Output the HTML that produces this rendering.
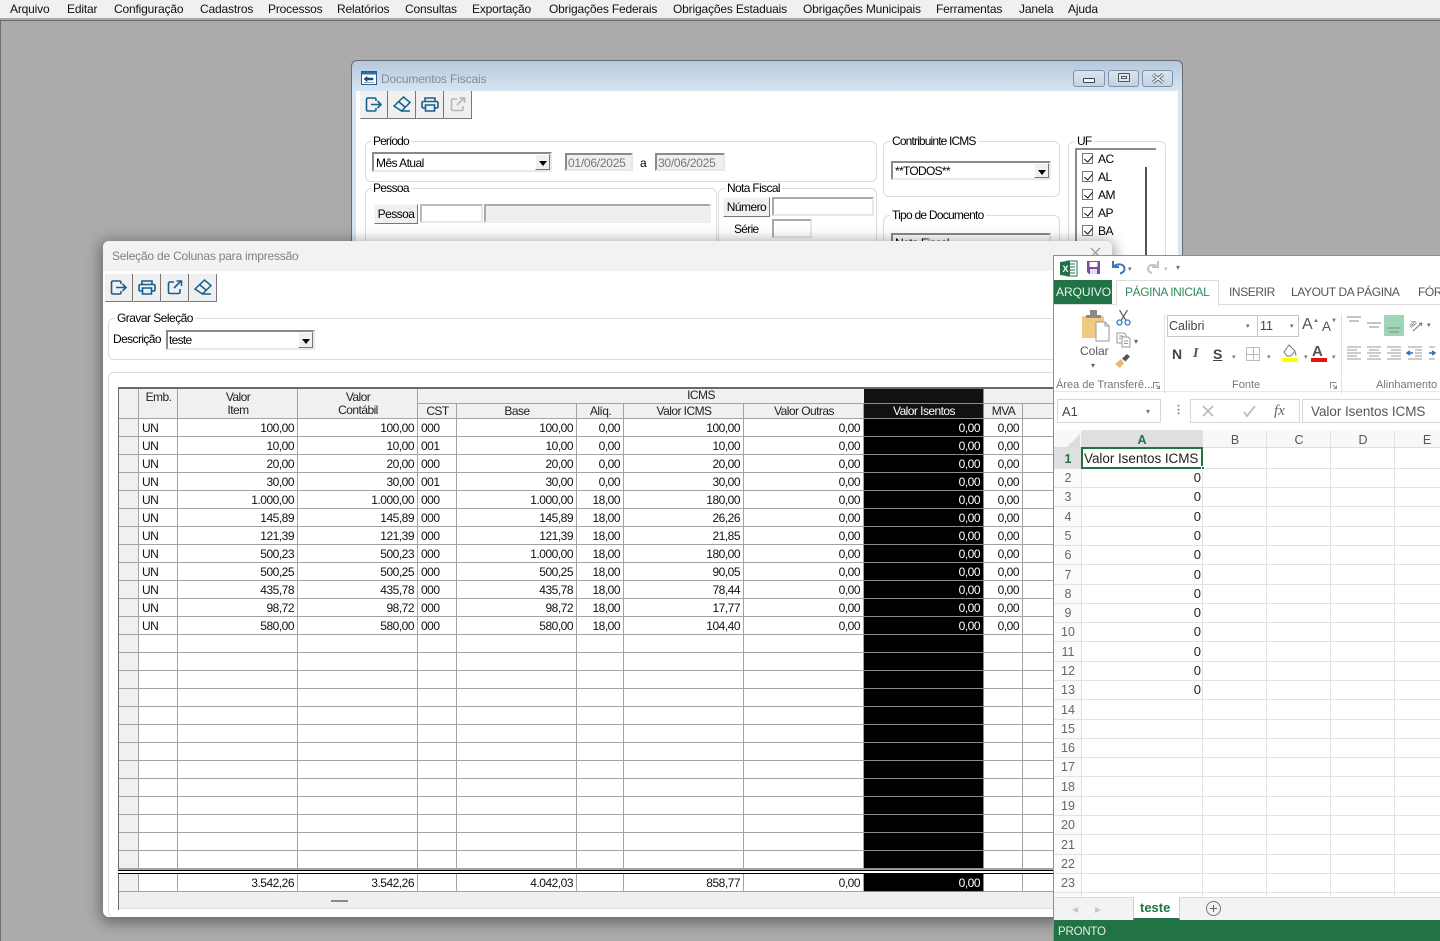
<!DOCTYPE html>
<html lang="pt-BR"><head><meta charset="utf-8"><title>Documentos Fiscais</title>
<style>
*{box-sizing:border-box}
html,body{margin:0;padding:0;width:1440px;height:941px;overflow:hidden;background:#ababab}
body{position:relative;font:12px "Liberation Sans",sans-serif;color:#000}
.a,.t{position:absolute}
.t{white-space:nowrap;letter-spacing:-.55px;line-height:14px}
#menu{left:0;top:0;width:1440px;height:18px;background:#f0f0f0}
#menu .t{top:2px;color:#111;letter-spacing:-.17px}
.gb{position:absolute;border:1px solid #dcdcdc;border-radius:6px}
.lg{position:absolute;background:#fff;padding:0 2px;line-height:13px;letter-spacing:-.75px;white-space:nowrap}
.ins{position:absolute;border:2px solid;border-color:#8a8a8a #e8e8e8 #e8e8e8 #8a8a8a;background:#fff}
.dis{background:#efefef;color:#777}
.arr{position:absolute;right:0;top:0;bottom:0;width:15px;background:#f0f0f0;border:1px solid;border-color:#fff #777 #777 #fff}
.arr:after{content:"";position:absolute;left:3px;top:6px;border:4px solid transparent;border-top:5px solid #000;border-bottom:0}
.btn{position:absolute;background:#f0f0f0;border:1px solid;border-color:#f8f8f8 #777 #777 #f8f8f8;text-align:center;letter-spacing:-.55px;line-height:19px}
.tb{position:absolute;width:28px;height:28px;background:#f0f0f0;border-right:1px solid #777;border-bottom:1px solid #777;border-left:1px solid #eee}
.tb svg{position:absolute;left:4px;top:5px}
.wb{position:absolute;top:70px;height:17px;border:1px solid #7f93a8;border-radius:3px;background:linear-gradient(#d9e5f0,#c4d2e2)}
.ck{position:absolute;left:1082px;width:11px;height:11px;border:1px solid #777;background:#fff}
.ck:after{content:"";position:absolute;left:3px;top:0;width:4px;height:7px;border:solid #111;border-width:0 1.6px 1.6px 0;transform:rotate(40deg)}
#grid{position:absolute;left:119px;top:419px;border-collapse:separate;border-spacing:0;table-layout:fixed;width:948px}
#grid td,#foot td{height:18px;padding:2px 3px 0 0;vertical-align:top;border-right:1px solid #a3a3a3;border-bottom:1px solid #a3a3a3;text-align:right;letter-spacing:-.5px;line-height:15px;font-size:12px;color:#111;overflow:hidden;white-space:nowrap}
#grid td:nth-child(1),#foot td:nth-child(1){background:#f0f0f0}
#grid td:nth-child(2),#grid td:nth-child(5){text-align:left;padding-left:3px}
#grid td:nth-child(10),#foot td:nth-child(10){background:#000;color:#fff;border-right-color:#8c8c8c;border-bottom-color:#8c8c8c}
#foot{position:absolute;left:119px;top:874px;border-collapse:separate;border-spacing:0;table-layout:fixed;width:948px}
.h{position:absolute;background:#f0f0f0;border-right:1px solid #a3a3a3;border-bottom:1px solid #a3a3a3;text-align:center;letter-spacing:-.55px;line-height:13px;color:#222;white-space:nowrap;padding-left:1px}
.r2{padding-top:1px}
#xl{position:absolute;left:1053px;top:255px;width:387px;height:686px;background:#fff;border-left:1px solid #6f9f86;border-top:1px solid #6f9f86;overflow:hidden;filter:blur(.35px)}
#xl .t,#xl .a{position:absolute}
#xl .t{letter-spacing:0}
.rn{position:absolute;left:0;width:28px;text-align:center;color:#666;font-size:12.5px;line-height:14px;padding-left:0}
.v{position:absolute;left:28px;width:120px;text-align:right;padding-right:1px;color:#222;font-size:13px;line-height:15px;letter-spacing:0}
.ch{position:absolute;top:178px;height:16px;line-height:16px;text-align:center;color:#555;font-size:12.5px;width:64px}
.vl{position:absolute;top:175px;width:1px;height:466px;background:#e2e2e2}
.hl{position:absolute;left:0;width:387px;height:1px;background:#e2e2e2}
.tab{color:#555;font-size:12px;letter-spacing:-.4px !important}
.sec{color:#777;font-size:11px}
</style></head><body>

<div class="a" id="menu">
<span class="t" style="left:10px">Arquivo</span><span class="t" style="left:67px">Editar</span><span class="t" style="left:114px">Configuração</span><span class="t" style="left:200px">Cadastros</span><span class="t" style="left:268px">Processos</span><span class="t" style="left:337px">Relatórios</span><span class="t" style="left:405px">Consultas</span><span class="t" style="left:472px">Exportação</span><span class="t" style="left:549px">Obrigações Federais</span><span class="t" style="left:673px">Obrigações Estaduais</span><span class="t" style="left:803px">Obrigações Municipais</span><span class="t" style="left:936px">Ferramentas</span><span class="t" style="left:1019px">Janela</span><span class="t" style="left:1068px">Ajuda</span>
</div>
<div class="a" style="left:0;top:18px;width:1440px;height:2px;background:#a8a8a8"></div>
<div class="a" style="left:0;top:20px;width:1440px;height:1px;background:#6e6e6e"></div>
<div class="a" style="left:0;top:20px;width:1px;height:921px;background:#6e6e6e"></div>

<!-- Documentos Fiscais window -->
<div class="a" style="left:351px;top:60px;width:832px;height:220px;border:1px solid #6b6b6b;border-radius:6px 6px 0 0;background:linear-gradient(#b6c8dc,#d7e5f3 30px);overflow:hidden">
 <div class="a" style="left:4px;top:30px;width:822px;height:190px;background:#fff"></div>
</div>
<svg class="a" style="left:361px;top:71px" width="16" height="14" viewBox="0 0 16 14"><rect x=".5" y=".5" width="15" height="13" fill="#fff" stroke="#1f5f96"/><rect x="1" y="1" width="14" height="2.500" fill="#2a6fa8"/><path d="M3 8l3-2.500V7h6v2H6v1.500zM3 11.500h10" fill="#1c4a70" stroke="#1c4a70" stroke-width=".6"/></svg>
<span class="t" style="left:381px;top:72px;color:#858c93;font-size:12px;letter-spacing:-.15px">Documentos Fiscais</span>
<div class="wb" style="left:1073px;width:32px"><div class="a" style="left:9px;top:7px;width:12px;height:5px;border:1px solid #444;background:#f4f4f4;border-radius:1px"></div></div>
<div class="wb" style="left:1108px;width:31px"><div class="a" style="left:9px;top:2px;width:12px;height:9px;border:1px solid #555;background:#dfe6ee;border-radius:1px"></div><div class="a" style="left:12px;top:5px;width:6px;height:3px;border:1px solid #555;background:#f4f4f4"></div></div>
<div class="wb" style="left:1142px;width:31px"><svg class="a" style="left:8px;top:2px" width="14" height="11" viewBox="0 0 14 11" fill="none"><path d="M2 1.500l10 8M12 1.500l-10 8" stroke="#555" stroke-width="3.200"/><path d="M2 1.500l10 8M12 1.500l-10 8" stroke="#f2f2f2" stroke-width="1.500"/></svg></div>

<div class="tb" style="left:360px;top:91px"><svg width="18" height="18" viewBox="0 0 18 18" fill="none" stroke="#15608f" stroke-width="1.600"><path d="M11 5V3.500Q11 2 9.500 2H3Q1.500 2 1.500 3.500V13.500Q1.500 15 3 15H9.500Q11 15 11 13.500V12"/><path d="M6 8.500h10M12.500 5l3.500 3.500-3.500 3.500"/></svg></div>
<div class="tb" style="left:388px;top:91px"><svg width="18" height="18" viewBox="0 0 18 18" fill="none" stroke="#15608f" stroke-width="1.500"><path d="M1 10L10.500 1 17 6.500 8.500 15z"/><path d="M5.500 5.500l7 6M8.500 15H17"/></svg></div>
<div class="tb" style="left:416px;top:91px"><svg width="18" height="18" viewBox="0 0 18 18" fill="none" stroke="#15608f" stroke-width="1.600"><path d="M4 5.500V2h10v3.500M4 12H2.500Q1 12 1 10.500V7q0-1.500 1.500-1.500h13Q17 5.500 17 7v3.500q0 1.500-1.500 1.500H14"/><path d="M4.500 9h9v6h-9z"/></svg></div>
<div class="tb" style="left:444px;top:91px"><svg width="18" height="18" viewBox="0 0 18 18" fill="none" stroke="#b5b5b5" stroke-width="1.600"><path d="M8 3H4Q2.500 3 2.500 4.500V13Q2.500 14.500 4 14.500H12.500Q14 14.500 14 13V10"/><path d="M8 9l7-7M10.500 2H15.500V7"/></svg></div>

<div class="gb" style="left:365px;top:141px;width:512px;height:41px"></div><span class="lg" style="left:371px;top:135px;letter-spacing:-.9px">Período</span>
<div class="ins" style="left:372px;top:152px;width:180px;height:20px"><span class="t" style="left:2px;top:2px">Mês Atual</span><div class="arr"></div></div>
<div class="ins dis" style="left:565px;top:153px;width:68px;height:18px"><span class="t" style="left:1px;top:1px;color:#777;letter-spacing:-.25px">01/06/2025</span></div>
<span class="t" style="left:640px;top:156px">a</span>
<div class="ins dis" style="left:655px;top:153px;width:70px;height:18px"><span class="t" style="left:1px;top:1px;color:#777;letter-spacing:-.25px">30/06/2025</span></div>

<div class="gb" style="left:365px;top:188px;width:352px;height:70px"></div><span class="lg" style="left:371px;top:182px;letter-spacing:-.7px">Pessoa</span>
<div class="btn" style="left:374px;top:204px;width:44px;height:20px">Pessoa</div>
<div class="ins" style="left:420px;top:204px;width:63px;height:19px;border-color:#bbb #e8e8e8 #e8e8e8 #bbb"></div>
<div class="ins dis" style="left:484px;top:204px;width:227px;height:19px;border-color:#aaa #eee #eee #aaa"></div>

<div class="gb" style="left:718px;top:188px;width:159px;height:70px"></div><span class="lg" style="left:725px;top:182px;letter-spacing:-.65px">Nota Fiscal</span>
<div class="btn" style="left:723px;top:197px;width:47px;height:20px">Número</div>
<div class="ins" style="left:772px;top:197px;width:102px;height:19px;border-color:#aaa #e8e8e8 #e8e8e8 #aaa"></div>
<span class="t" style="left:734px;top:222px;letter-spacing:-.7px">Série</span>
<div class="ins" style="left:772px;top:219px;width:40px;height:19px;border-color:#aaa #e8e8e8 #e8e8e8 #aaa"></div>

<div class="gb" style="left:883px;top:141px;width:177px;height:56px"></div><span class="lg" style="left:890px;top:135px;letter-spacing:-.85px">Contribuinte ICMS</span>
<div class="ins" style="left:891px;top:161px;width:160px;height:19px"><span class="t" style="left:2px;top:1px;letter-spacing:-.7px">**TODOS**</span><div class="arr"></div></div>
<div class="gb" style="left:883px;top:215px;width:177px;height:50px"></div><span class="lg" style="left:890px;top:209px">Tipo de Documento</span>
<div class="ins" style="left:891px;top:233px;width:160px;height:20px"><span class="t" style="left:2px;top:1px">Nota Fiscal</span></div>

<div class="gb" style="left:1068px;top:141px;width:98px;height:130px"></div><span class="lg" style="left:1075px;top:135px">UF</span>
<div class="ins" style="left:1075px;top:148px;width:81px;height:110px;border-right:0;border-bottom:0"></div>
<div class="a" style="left:1145px;top:167px;width:2px;height:90px;background:#555"></div>
<div class="ck" style="top:153px"></div><span class="t" style="left:1098px;top:152px">AC</span>
<div class="ck" style="top:171px"></div><span class="t" style="left:1098px;top:170px">AL</span>
<div class="ck" style="top:189px"></div><span class="t" style="left:1098px;top:188px">AM</span>
<div class="ck" style="top:207px"></div><span class="t" style="left:1098px;top:206px">AP</span>
<div class="ck" style="top:225px"></div><span class="t" style="left:1098px;top:224px">BA</span>

<!-- Selection window -->
<div class="a" style="left:103px;top:241px;width:1009px;height:676px;background:#fff;border-radius:6px;box-shadow:0 3px 14px 3px rgba(0,0,0,.38)">
 <div class="a" style="left:0;top:0;width:1009px;height:30px;background:#f2f2f2;border-radius:6px 6px 0 0"></div>
</div>
<svg class="a" style="left:1090px;top:247px" width="12" height="9" viewBox="0 0 12 9" fill="none" stroke="#888"><path d="M1 1l9 9M10 1l-9 9"/></svg>
<span class="t" style="left:112px;top:249px;color:#808080;letter-spacing:-.21px">Seleção de Colunas para impressão</span>

<div class="tb" style="left:105px;top:274px"><svg width="18" height="18" viewBox="0 0 18 18" fill="none" stroke="#15608f" stroke-width="1.600"><path d="M11 5V3.500Q11 2 9.500 2H3Q1.500 2 1.500 3.500V13.500Q1.500 15 3 15H9.500Q11 15 11 13.500V12"/><path d="M6 8.500h10M12.500 5l3.500 3.500-3.500 3.500"/></svg></div>
<div class="tb" style="left:133px;top:274px"><svg width="18" height="18" viewBox="0 0 18 18" fill="none" stroke="#15608f" stroke-width="1.600"><path d="M4 5.500V2h10v3.500M4 12H2.500Q1 12 1 10.500V7q0-1.500 1.500-1.500h13Q17 5.500 17 7v3.500q0 1.500-1.500 1.500H14"/><path d="M4.500 9h9v6h-9z"/></svg></div>
<div class="tb" style="left:161px;top:274px"><svg width="18" height="18" viewBox="0 0 18 18" fill="none" stroke="#15608f" stroke-width="1.600"><path d="M8 3H4Q2.500 3 2.500 4.500V13Q2.500 14.500 4 14.500H12.500Q14 14.500 14 13V10"/><path d="M8 9l7-7M10.500 2H15.500V7"/></svg></div>
<div class="tb" style="left:189px;top:274px"><svg width="18" height="18" viewBox="0 0 18 18" fill="none" stroke="#15608f" stroke-width="1.500"><path d="M1 10L10.500 1 17 6.500 8.500 15z"/><path d="M5.500 5.500l7 6M8.500 15H17"/></svg></div>

<div class="gb" style="left:108px;top:318px;width:1000px;height:42px"></div><span class="lg" style="left:115px;top:312px;letter-spacing:-.53px">Gravar Seleção</span>
<span class="t" style="left:113px;top:332px;letter-spacing:-.6px">Descrição</span>
<div class="ins" style="left:166px;top:330px;width:149px;height:20px"><span class="t" style="left:1px;top:1px;letter-spacing:-.7px">teste</span><div class="arr"></div></div>
<div class="gb" style="left:108px;top:372px;width:1000px;height:545px;border-bottom:0"></div>

<!-- Grid -->
<div class="a" style="left:118px;top:387px;width:950px;height:523px;background:#fff;border-left:1px solid #6a6a6a;border-top:2px solid #6a6a6a"></div>
<div class="h" style="left:119px;top:389px;width:20px;height:30px"></div>
<div class="h" style="left:139px;top:389px;width:39px;height:30px;padding-top:2px">Emb.</div>
<div class="h" style="left:178px;top:389px;width:120px;height:30px;padding-top:2px">Valor<br>Item</div>
<div class="h" style="left:298px;top:389px;width:120px;height:30px;padding-top:2px">Valor<br>Contábil</div>
<div class="h" style="left:418px;top:389px;width:566px;height:15px">ICMS</div>
<div class="h r2" style="left:418px;top:404px;width:39px;height:15px">CST</div>
<div class="h r2" style="left:457px;top:404px;width:120px;height:15px">Base</div>
<div class="h r2" style="left:577px;top:404px;width:47px;height:15px">Alíq.</div>
<div class="h r2" style="left:624px;top:404px;width:120px;height:15px">Valor ICMS</div>
<div class="h r2" style="left:744px;top:404px;width:120px;height:15px">Valor Outras</div>
<div class="h" style="left:864px;top:389px;width:120px;height:15px;background:#111;border-right-color:#8c8c8c;border-bottom-color:#8c8c8c"></div>
<div class="h r2" style="left:864px;top:404px;width:120px;height:15px;background:#111;color:#fff;border-right-color:#8c8c8c;border-bottom-color:#8c8c8c">Valor Isentos</div>
<div class="h" style="left:984px;top:389px;width:84px;height:15px;border-right:0"></div>
<div class="h r2" style="left:984px;top:404px;width:39px;height:15px">MVA</div>
<div class="h" style="left:1023px;top:404px;width:45px;height:15px;border-right:0"></div>

<table id="grid"><colgroup><col style="width:20px"><col style="width:39px"><col style="width:120px"><col style="width:120px"><col style="width:39px"><col style="width:120px"><col style="width:47px"><col style="width:120px"><col style="width:120px"><col style="width:120px"><col style="width:39px"><col style="width:44px"></colgroup>
<tr><td></td><td>UN</td><td>100,00</td><td>100,00</td><td>000</td><td>100,00</td><td>0,00</td><td>100,00</td><td>0,00</td><td>0,00</td><td>0,00</td><td></td></tr>
<tr><td></td><td>UN</td><td>10,00</td><td>10,00</td><td>001</td><td>10,00</td><td>0,00</td><td>10,00</td><td>0,00</td><td>0,00</td><td>0,00</td><td></td></tr>
<tr><td></td><td>UN</td><td>20,00</td><td>20,00</td><td>000</td><td>20,00</td><td>0,00</td><td>20,00</td><td>0,00</td><td>0,00</td><td>0,00</td><td></td></tr>
<tr><td></td><td>UN</td><td>30,00</td><td>30,00</td><td>001</td><td>30,00</td><td>0,00</td><td>30,00</td><td>0,00</td><td>0,00</td><td>0,00</td><td></td></tr>
<tr><td></td><td>UN</td><td>1.000,00</td><td>1.000,00</td><td>000</td><td>1.000,00</td><td>18,00</td><td>180,00</td><td>0,00</td><td>0,00</td><td>0,00</td><td></td></tr>
<tr><td></td><td>UN</td><td>145,89</td><td>145,89</td><td>000</td><td>145,89</td><td>18,00</td><td>26,26</td><td>0,00</td><td>0,00</td><td>0,00</td><td></td></tr>
<tr><td></td><td>UN</td><td>121,39</td><td>121,39</td><td>000</td><td>121,39</td><td>18,00</td><td>21,85</td><td>0,00</td><td>0,00</td><td>0,00</td><td></td></tr>
<tr><td></td><td>UN</td><td>500,23</td><td>500,23</td><td>000</td><td>1.000,00</td><td>18,00</td><td>180,00</td><td>0,00</td><td>0,00</td><td>0,00</td><td></td></tr>
<tr><td></td><td>UN</td><td>500,25</td><td>500,25</td><td>000</td><td>500,25</td><td>18,00</td><td>90,05</td><td>0,00</td><td>0,00</td><td>0,00</td><td></td></tr>
<tr><td></td><td>UN</td><td>435,78</td><td>435,78</td><td>000</td><td>435,78</td><td>18,00</td><td>78,44</td><td>0,00</td><td>0,00</td><td>0,00</td><td></td></tr>
<tr><td></td><td>UN</td><td>98,72</td><td>98,72</td><td>000</td><td>98,72</td><td>18,00</td><td>17,77</td><td>0,00</td><td>0,00</td><td>0,00</td><td></td></tr>
<tr><td></td><td>UN</td><td>580,00</td><td>580,00</td><td>000</td><td>580,00</td><td>18,00</td><td>104,40</td><td>0,00</td><td>0,00</td><td>0,00</td><td></td></tr>
<tr><td></td><td></td><td></td><td></td><td></td><td></td><td></td><td></td><td></td><td></td><td></td><td></td></tr>
<tr><td></td><td></td><td></td><td></td><td></td><td></td><td></td><td></td><td></td><td></td><td></td><td></td></tr>
<tr><td></td><td></td><td></td><td></td><td></td><td></td><td></td><td></td><td></td><td></td><td></td><td></td></tr>
<tr><td></td><td></td><td></td><td></td><td></td><td></td><td></td><td></td><td></td><td></td><td></td><td></td></tr>
<tr><td></td><td></td><td></td><td></td><td></td><td></td><td></td><td></td><td></td><td></td><td></td><td></td></tr>
<tr><td></td><td></td><td></td><td></td><td></td><td></td><td></td><td></td><td></td><td></td><td></td><td></td></tr>
<tr><td></td><td></td><td></td><td></td><td></td><td></td><td></td><td></td><td></td><td></td><td></td><td></td></tr>
<tr><td></td><td></td><td></td><td></td><td></td><td></td><td></td><td></td><td></td><td></td><td></td><td></td></tr>
<tr><td></td><td></td><td></td><td></td><td></td><td></td><td></td><td></td><td></td><td></td><td></td><td></td></tr>
<tr><td></td><td></td><td></td><td></td><td></td><td></td><td></td><td></td><td></td><td></td><td></td><td></td></tr>
<tr><td></td><td></td><td></td><td></td><td></td><td></td><td></td><td></td><td></td><td></td><td></td><td></td></tr>
<tr><td></td><td></td><td></td><td></td><td></td><td></td><td></td><td></td><td></td><td></td><td></td><td></td></tr>
<tr><td></td><td></td><td></td><td></td><td></td><td></td><td></td><td></td><td></td><td></td><td></td><td></td></tr>
</table>
<div class="a" style="left:118px;top:869px;width:950px;height:1px;background:#a3a3a3"></div>
<div class="a" style="left:118px;top:870px;width:950px;height:1px;background:#000"></div>
<div class="a" style="left:118px;top:871px;width:950px;height:2px;background:#fff"></div>
<div class="a" style="left:118px;top:873px;width:950px;height:1px;background:#000"></div>
<table id="foot"><colgroup><col style="width:20px"><col style="width:39px"><col style="width:120px"><col style="width:120px"><col style="width:39px"><col style="width:120px"><col style="width:47px"><col style="width:120px"><col style="width:120px"><col style="width:120px"><col style="width:39px"><col style="width:44px"></colgroup>
<tr><td></td><td></td><td>3.542,26</td><td>3.542,26</td><td></td><td>4.042,03</td><td></td><td>858,77</td><td>0,00</td><td>0,00</td><td></td><td></td></tr>
</table>
<div class="a" style="left:119px;top:892px;width:950px;height:17px;background:#efefef;border-bottom:1px solid #dcdcdc"></div>
<div class="a" style="left:331px;top:900px;width:17px;height:2px;background:#8a8a8a"></div>

<!-- Excel -->
<div id="xl">
 <!-- QAT -->
 <svg class="a" style="left:6px;top:4px" width="18" height="17" viewBox="0 0 18 17"><path d="M7 1h10v15H7z" fill="#fff" stroke="#217346"/><path d="M9 4h6M9 7h6M9 10h6M9 13h6" stroke="#217346"/><path d="M0 2l10-1.500v16L0 15z" fill="#217346"/><text x="2.500" y="12" font-family="Liberation Sans" font-size="9" font-weight="bold" fill="#fff">X</text></svg>
 <svg class="a" style="left:32px;top:4px" width="15" height="15" viewBox="0 0 15 15"><path d="M1 1h13v13H3l-2-2z" fill="#7c4d9e"/><rect x="3.500" y="2" width="8" height="5" fill="#fff"/><rect x="4" y="9" width="7" height="5" fill="#e6dcef"/></svg>
 <svg class="a" style="left:55px;top:3px" width="18" height="17" viewBox="0 0 18 17" fill="none" stroke="#3a79b8" stroke-width="2"><path d="M4 2v6h6"/><path d="M4.500 8C7 4.500 15 4 15.500 9.500c.2 2.500-2 4.500-4.500 5"/></svg>
 <span class="t" style="left:74px;top:7px;font-size:7px;color:#666">▾</span>
 <svg class="a" style="left:92px;top:4px" width="16" height="15" viewBox="0 0 16 15" fill="none" stroke="#c4c4c4" stroke-width="2"><path d="M12 1v6H6"/><path d="M11.500 7C9 4 2.500 4 2 8.500c-.2 2 1.500 4 4 4.500"/></svg>
 <span class="t" style="left:110px;top:7px;font-size:7px;color:#bbb">▾</span>
 <span class="t" style="left:122px;top:5px;font-size:8px;color:#777">▾</span>
 <!-- Tabs -->
 <div class="a" style="left:0;top:24px;width:58px;height:25px;background:#217346"></div>
 <span class="t" style="left:2px;top:29px;color:#e8f2ec;font-size:12px;letter-spacing:-.05px">ARQUIVO</span>
 <div class="a" style="left:62px;top:24px;width:103px;height:26px;background:#fff;border:1px solid #dcdcdc;border-bottom:0;z-index:2"></div>
 <span class="t tab" style="left:71px;top:29px;color:#2f8a5c;z-index:3">PÁGINA INICIAL</span>
 <span class="t tab" style="left:175px;top:29px">INSERIR</span>
 <span class="t tab" style="left:237px;top:29px">LAYOUT DA PÁGINA</span>
 <span class="t tab" style="left:364px;top:29px">FÓR</span>
 <div class="a" style="left:0;top:48px;width:387px;height:1px;background:#dcdcdc"></div>
 <!-- clipboard -->
 <svg class="a" style="left:27px;top:53px" width="30" height="35" viewBox="0 0 30 35"><rect x="1" y="7" width="22" height="22" rx="1" fill="#f0ca80"/><rect x="9" y="1" width="7" height="8" fill="#8a8a8a"/><rect x="5" y="6" width="15" height="3" fill="#8a8a8a"/><path d="M15 13h9l4 4v15H15z" fill="#fff" stroke="#9a9a9a"/><path d="M24 13v4h4" fill="none" stroke="#9a9a9a"/></svg>
 <svg class="a" style="left:62px;top:54px" width="15" height="16" viewBox="0 0 15 16" fill="none"><path d="M3.500 0l6.500 10.500M11.500 0L5 10.500" stroke="#666" stroke-width="1.300"/><circle cx="3.500" cy="12.500" r="2.500" stroke="#3a79b8" stroke-width="1.300"/><circle cx="11.500" cy="12.500" r="2.500" stroke="#3a79b8" stroke-width="1.300"/></svg>
 <svg class="a" style="left:62px;top:76px" width="16" height="16" viewBox="0 0 16 16" fill="#fff" stroke="#999"><path d="M1 1h7l2 2v8H1z"/><path d="M6 5h6l2 2v8H6z"/><path d="M3 4h4M3 6.500h2M8 9h4M8 11.500h4" stroke="#7b9cbc"/></svg>
 <span class="t" style="left:80px;top:79px;font-size:8px;color:#666">▾</span>
 <span class="t" style="left:26px;top:88px;color:#555;font-size:12px">Colar</span>
 <span class="t" style="left:37px;top:103px;font-size:8px;color:#666">▾</span>
 <svg class="a" style="left:61px;top:98px" width="16" height="14" viewBox="0 0 16 14"><path d="M0 10l6-5 3 4-4 5z" fill="#e9b86a"/><path d="M7 4.500l5-4.500 3 2.500-4.500 5z" fill="#555"/></svg>
 <span class="t sec" style="left:2px;top:122px">Área de Transferê...</span>
 <svg class="a" style="left:99px;top:126px" width="8" height="7" viewBox="0 0 8 7" fill="none" stroke="#888"><path d="M.5 6.500V.5h6M3 3l3.500 3.500M6.500 3.500v3H3.500"/></svg>
 <div class="a" style="left:110px;top:58px;width:1px;height:80px;background:#e2e2e2"></div>
 <!-- font -->
 <div class="a" style="left:113px;top:59px;width:91px;height:22px;border:1px solid #c6c6c6"></div>
 <div class="a" style="left:203px;top:59px;width:42px;height:22px;border:1px solid #c6c6c6"></div>
 <span class="t" style="left:115px;top:63px;color:#444;font-size:12.5px">Calibri</span>
 <span class="t" style="left:192px;top:64px;font-size:7px;color:#666">▾</span>
 <span class="t" style="left:206px;top:63px;color:#444;font-size:12.5px">11</span>
 <span class="t" style="left:236px;top:64px;font-size:7px;color:#666">▾</span>
 <span class="t" style="left:248px;top:62px;color:#555;font-size:16px">A</span><span class="t" style="left:259px;top:58px;color:#3a79b8;font-size:6px">▲</span>
 <span class="t" style="left:268px;top:64px;color:#555;font-size:13.500px">A</span><span class="t" style="left:277px;top:58px;color:#3a79b8;font-size:6px">▼</span>
 <span class="t" style="left:118px;top:91px;color:#444;font-size:14px;font-weight:bold">N</span>
 <span class="t" style="left:139px;top:91px;color:#555;font-size:14px;font-weight:bold;font-style:italic;font-family:'Liberation Serif',serif">I</span>
 <span class="t" style="left:159px;top:91px;color:#444;font-size:14px;font-weight:bold;text-decoration:underline">S</span>
 <span class="t" style="left:178px;top:95px;font-size:7px;color:#777">▾</span>
 <div class="a" style="left:192px;top:91px;width:14px;height:14px;border:1px solid #bbb;background:linear-gradient(#bbb,#bbb) 6px 0/1px 100% no-repeat,linear-gradient(#bbb,#bbb) 0 6px/100% 1px no-repeat"></div>
 <span class="t" style="left:213px;top:95px;font-size:7px;color:#777">▾</span>
 <svg class="a" style="left:228px;top:88px" width="16" height="15" viewBox="0 0 16 15"><path d="M7 1l6 6-4 5H5L2 8z" fill="#fff" stroke="#777"/><path d="M13 7c1 2 2 3 1 5-1-1-1-3-1-5z" fill="#3a79b8"/></svg>
 <div class="a" style="left:228px;top:102px;width:16px;height:4px;background:#ffff00"></div>
 <span class="t" style="left:250px;top:95px;font-size:7px;color:#777">▾</span>
 <span class="t" style="left:258px;top:89px;color:#555;font-size:15px;font-weight:bold">A</span>
 <div class="a" style="left:257px;top:102px;width:16px;height:4px;background:#e81010"></div>
 <span class="t" style="left:278px;top:95px;font-size:7px;color:#777">▾</span>
 <span class="t sec" style="left:178px;top:122px">Fonte</span>
 <svg class="a" style="left:276px;top:126px" width="8" height="7" viewBox="0 0 8 7" fill="none" stroke="#888"><path d="M.5 6.500V.5h6M3 3l3.500 3.500M6.500 3.500v3H3.500"/></svg>
 <div class="a" style="left:287px;top:58px;width:1px;height:80px;background:#e2e2e2"></div>
 <!-- alignment -->
 <svg class="a" style="left:291px;top:58px" width="96" height="50" viewBox="0 0 96 50">
  <rect x="39" y="1" width="20" height="21" fill="#9ed5b4"/>
  <path d="M2 3h14M4 7h10M22 9h14M24 13h10M42 14h14M44 18h10" stroke="#888"/>
  <path d="M2 33h14M2 36h10M2 39h14M2 42h10M2 45h14M22 33h14M24 36h10M22 39h14M24 42h10M22 45h14M42 33h14M46 36h10M42 39h14M46 42h10M42 45h14M63 33h14M63 45h14M70 36h7M70 39h7M70 42h7M84 33h6M84 45h6" stroke="#999"/>
  <path d="M68 39h-5m2-2l-3 2 3 2M84 39h5m-2-2l3 2-3 2" stroke="#2a6fb8" stroke-width="1.500" fill="none"/>
  <text x="66" y="14" font-family="Liberation Sans" font-size="7" fill="#666" transform="rotate(-38 66 14)">ab</text>
  <path d="M68 17l9-8M77 9l-3 .5M77 9l-.5 3" stroke="#777" fill="none"/>
 </svg>
 <span class="t" style="left:373px;top:63px;font-size:7px;color:#666;z-index:2">▾</span>
 <span class="t sec" style="left:322px;top:122px">Alinhamento</span>
 <div class="a" style="left:0;top:135px;width:387px;height:1px;background:#e8e8e8"></div>
 <!-- formula bar -->
 <div class="a" style="left:3px;top:143px;width:104px;height:24px;border:1px solid #d6d6d6"></div>
 <span class="t" style="left:8px;top:149px;color:#444;font-size:13px">A1</span>
 <span class="t" style="left:92px;top:149px;font-size:8px;color:#777">▾</span>
 <span class="t" style="left:119px;top:147px;color:#888;font-size:11px;font-weight:bold">⋮</span>
 <div class="a" style="left:136px;top:143px;width:110px;height:24px;border:1px solid #d6d6d6"></div>
 <svg class="a" style="left:147px;top:148px" width="60" height="14" viewBox="0 0 60 14" fill="none" stroke="#bdbdbd" stroke-width="1.800"><path d="M2 2l10 10M12 2L2 12M43 8l3 4 8-10"/></svg>
 <span class="t" style="left:220px;top:147px;color:#666;font:italic 15px 'Liberation Serif',serif">fx</span>
 <div class="a" style="left:248px;top:143px;width:140px;height:24px;border:1px solid #d6d6d6;border-right:0"></div>
 <span class="t" style="left:257px;top:149px;color:#555;font-size:13.500px;letter-spacing:-.05px">Valor Isentos ICMS</span>
 <!-- sheet -->
 <div class="a" style="left:0;top:174px;width:387px;height:18px;background:#f8f8f8;border-bottom:1px solid #dcdcdc"></div>
 <svg class="a" style="left:12px;top:177px" width="15" height="15"><path d="M14 1v13H1z" fill="#dcdcdc"/></svg>
 <div class="a" style="left:28px;top:174px;width:121px;height:18px;background:#dfdfdf;border-bottom:1px solid #aaa"></div>
 <div class="ch" style="left:28px;width:120px;color:#217346;font-weight:bold;top:176px">A</div>
 <div class="ch" style="left:149px;top:176px">B</div><div class="ch" style="left:213px;top:176px">C</div><div class="ch" style="left:277px;top:176px">D</div><div class="ch" style="left:341px;top:176px">E</div>
 <div class="a" style="left:0;top:192px;width:28px;height:460px;background:#fbfbfb"></div>
 <div class="a" style="left:0;top:192px;width:28px;height:20px;background:#dfdfdf"></div>
 <div class="vl" style="left:27px"></div><div class="vl" style="left:148px"></div><div class="vl" style="left:212px"></div><div class="vl" style="left:276px"></div><div class="vl" style="left:340px"></div>
 <div class="hl" style="top:212px"></div><div class="hl" style="top:231px"></div><div class="hl" style="top:250px"></div><div class="hl" style="top:270px"></div><div class="hl" style="top:289px"></div><div class="hl" style="top:308px"></div><div class="hl" style="top:328px"></div><div class="hl" style="top:347px"></div><div class="hl" style="top:366px"></div><div class="hl" style="top:385px"></div><div class="hl" style="top:405px"></div><div class="hl" style="top:424px"></div><div class="hl" style="top:443px"></div><div class="hl" style="top:463px"></div><div class="hl" style="top:482px"></div><div class="hl" style="top:501px"></div><div class="hl" style="top:520px"></div><div class="hl" style="top:540px"></div><div class="hl" style="top:559px"></div><div class="hl" style="top:578px"></div><div class="hl" style="top:598px"></div><div class="hl" style="top:617px"></div><div class="hl" style="top:636px"></div>
 <div class="rn" style="top:196px;color:#217346;font-weight:bold">1</div><div class="rn" style="top:215px">2</div><div class="rn" style="top:234px">3</div><div class="rn" style="top:254px">4</div><div class="rn" style="top:273px">5</div><div class="rn" style="top:292px">6</div><div class="rn" style="top:312px">7</div><div class="rn" style="top:331px">8</div><div class="rn" style="top:350px">9</div><div class="rn" style="top:369px">10</div><div class="rn" style="top:389px">11</div><div class="rn" style="top:408px">12</div><div class="rn" style="top:427px">13</div><div class="rn" style="top:447px">14</div><div class="rn" style="top:466px">15</div><div class="rn" style="top:485px">16</div><div class="rn" style="top:504px">17</div><div class="rn" style="top:524px">18</div><div class="rn" style="top:543px">19</div><div class="rn" style="top:562px">20</div><div class="rn" style="top:582px">21</div><div class="rn" style="top:601px">22</div><div class="rn" style="top:620px">23</div>
 <div class="v" style="top:214px">0</div><div class="v" style="top:233px">0</div><div class="v" style="top:253px">0</div><div class="v" style="top:272px">0</div><div class="v" style="top:291px">0</div><div class="v" style="top:311px">0</div><div class="v" style="top:330px">0</div><div class="v" style="top:349px">0</div><div class="v" style="top:368px">0</div><div class="v" style="top:388px">0</div><div class="v" style="top:407px">0</div><div class="v" style="top:426px">0</div>
 <div class="a" style="left:27px;top:191px;width:122px;height:22px;border:2px solid #217346;background:#fff"></div>
 <span class="t" style="left:30px;top:196px;color:#222;font-size:13.500px;letter-spacing:-.05px">Valor Isentos ICMS</span>
 <div class="a" style="left:147px;top:210px;width:4px;height:4px;background:#217346;border:1px solid #fff"></div>
 <!-- tab bar -->
 <div class="a" style="left:0;top:641px;width:387px;height:23px;background:#f3f3f3;border-top:1px solid #dcdcdc"></div>
 <span class="t" style="left:18px;top:647px;font-size:8px;color:#c8c8c8">◀</span><span class="t" style="left:41px;top:647px;font-size:8px;color:#c8c8c8">▶</span>
 <div class="a" style="left:79px;top:641px;width:47px;height:23px;background:#fff;border:1px solid #cfcfcf;border-top:0;border-bottom:2px solid #217346"></div>
 <span class="t" style="left:86px;top:645px;color:#217346;font-size:13px;font-weight:bold;letter-spacing:0">teste</span>
 <div class="a" style="left:152px;top:645px;width:15px;height:15px;border:1px solid #777;border-radius:50%"><div class="a" style="left:3px;top:6px;width:7px;height:1px;background:#666"></div><div class="a" style="left:6px;top:3px;width:1px;height:7px;background:#666"></div></div>
 <!-- status -->
 <div class="a" style="left:0;top:664px;width:387px;height:22px;background:#217346"></div>
 <span class="t" style="left:4px;top:669px;color:#e2efe8;font-size:11.500px;letter-spacing:-.2px">PRONTO</span>
</div>
</body></html>
